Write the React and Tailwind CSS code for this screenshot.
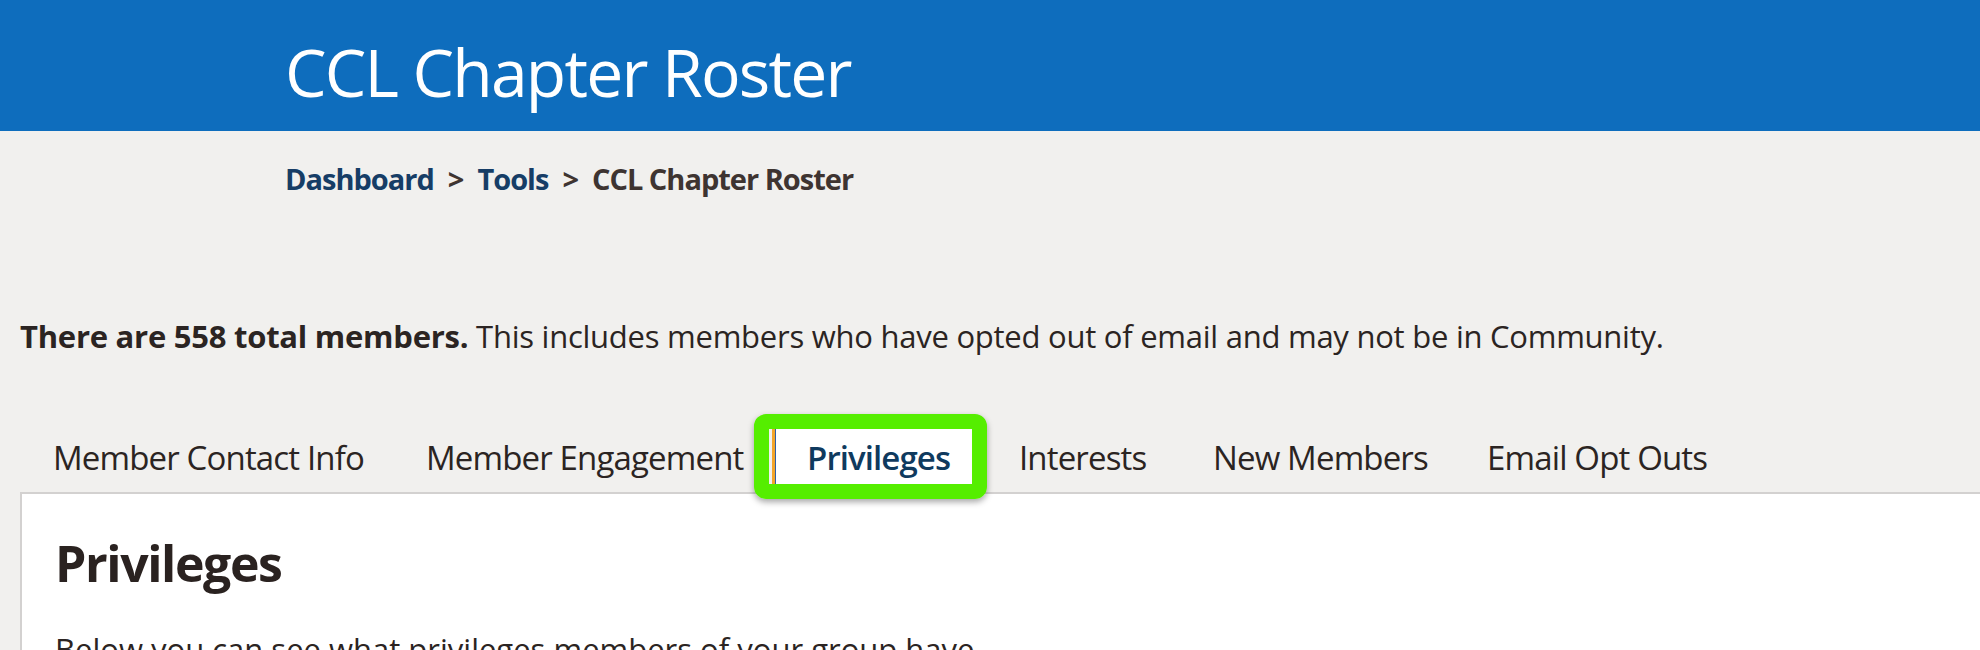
import React from "react";

const tabs = [
  { label: "Member Contact Info", w: "w-[373px]" },
  { label: "Member Engagement", w: "w-[379px]" },
  { label: "Privileges", w: "w-[214px]", active: true },
  { label: "Interests", w: "w-[194px]" },
  { label: "New Members", w: "w-[274px]" },
  { label: "Email Opt Outs", w: "w-[286px]" },
];

export default function App() {
  return (
    <div
      className="min-h-screen bg-[#f1f0ee] text-[#2b2422] overflow-hidden"
      style={{ fontFamily: '"Open Sans", "Noto Sans", sans-serif' }}
    >
      {/* HEADER */}
      <header className="h-[131px] bg-[#0e6dbd] pt-[38px] pl-[285px]">
        <h1 className="text-[66px] leading-[66px] text-white tracking-[-1.8px]">
          CCL Chapter Roster
        </h1>
      </header>

      {/* BREADCRUMB */}
      <nav className="mt-[33px] pl-[285px] text-[29px] leading-[30px] font-bold tracking-[-1px]">
        <span className="text-[#163d66]">Dashboard</span>
        <span className="text-[#3e3431] mx-[14px]">&gt;</span>
        <span className="text-[#163d66]">Tools</span>
        <span className="text-[#3e3431] mx-[14px]">&gt;</span>
        <span className="text-[#3e3431]">CCL Chapter Roster</span>
      </nav>

      {/* TOTAL */}
      <p className="mt-[127px] pl-[20px] text-[31px] leading-[31px] tracking-[-0.25px] whitespace-nowrap">
        <span className="font-bold">There are 558 total members.</span> This
        includes members who have opted out of email and may not be in
        Community.
      </p>

      {/* TABS */}
      <div className="mt-[74px] ml-[20px] flex h-[66px] items-start">
        {tabs.map((t) =>
          t.active ? (
            <div key={t.label} className={`relative ${t.w} mt-[3px] h-[63px]`}>
              <div className="h-full bg-white border-l-[3px] border-[#f4a52a] shadow-[inset_1px_0_0_#2f5fa8] pt-[12px] pl-[32px] text-[33px] leading-[33px] font-semibold text-[#0f3a5e] tracking-[-0.9px] whitespace-nowrap">
                {t.label}
              </div>
              <div className="absolute left-[-18px] top-[-15px] w-[233px] h-[85px] border-[15px] border-[#55ee00] rounded-[12px] shadow-[0_3px_6px_rgba(0,0,0,0.35)]" />
            </div>
          ) : (
            <div
              key={t.label}
              className={`${t.w} h-[66px] pt-[15px] pl-[33px] text-[33px] leading-[33px] tracking-[-0.85px] whitespace-nowrap`}
            >
              {t.label}
            </div>
          )
        )}
      </div>

      {/* PANEL */}
      <section className="ml-[20px] bg-white border-t-2 border-l-2 border-[#d3d1d0] pt-[44px] pl-[33px] h-[300px]">
        <h2 className="text-[50px] leading-[50px] font-bold tracking-[-1.4px] text-[#2a2220]">
          Privileges
        </h2>
        <p className="mt-[46px] text-[31px] leading-[31px] tracking-[0px]">
          Below you can see what privileges members of your group have.
        </p>
      </section>
    </div>
  );
}
